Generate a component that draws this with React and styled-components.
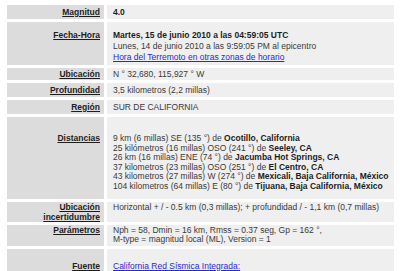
import React from "react";
import styled, { createGlobalStyle } from "styled-components";

const Global = createGlobalStyle`
  html, body { margin: 0; padding: 0; background: #ffffff; }
  body { font-family: "Liberation Sans", Arial, sans-serif; }
`;

const Table = styled.div`
  display: flex;
  flex-direction: column;
  gap: 3px;
  padding: 5px 6px 0 7px;
  width: 387px;
`;

const Row = styled.div`
  display: grid;
  grid-template-columns: 97px 287px;
  column-gap: 3px;
`;

const Label = styled.div`
  background: #dcdcdc;
  text-align: right;
  padding: ${(p) => p.$pt ?? 2.5}px 4px ${(p) => p.$pb ?? 2.5}px 4px;
  font-size: 8.5px;
  line-height: ${(p) => p.$lh ?? 9}px;
  font-weight: bold;
  color: #1e1e1e;
  text-decoration: underline;
`;

const Value = styled.div`
  background: #efefef;
  padding: ${(p) => p.$pt ?? 2.5}px 4px ${(p) => p.$pb ?? 2.5}px 6px;
  font-size: 8.5px;
  line-height: ${(p) => p.$lh ?? 9}px;
  color: #3a3a3a;
  white-space: nowrap;
`;

const Strong = styled.b`
  font-weight: bold;
  color: #1e1e1e;
`;

const Link = styled.a`
  color: #2a2acc;
  text-decoration: underline;
`;

const Line = styled.div``;

function Item({ label, pt, pb, lh, children }) {
  return (
    <Row>
      <Label $pt={pt} $pb={pb} $lh={lh}>{label}</Label>
      <Value $pt={pt} $pb={pb} $lh={lh}>{children}</Value>
    </Row>
  );
}

const distances = [
  ["9 km (6 millas) SE (135 °) de ", "Ocotillo, California"],
  ["25 kilómetros (16 millas) OSO (241 °) de ", "Seeley, CA"],
  ["26 km (16 millas) ENE (74 °) de ", "Jacumba Hot Springs, CA"],
  ["37 kilometros (23 millas) OSO (251 °) de ", "El Centro, CA"],
  ["43 kilometros (27 millas) W (274 °) de ", "Mexicali, Baja California, México"],
  ["104 kilometros (64 millas) E (80 °) de ", "Tijuana, Baja California, México"],
];

export default function App() {
  return (
    <>
      <Global />
      <Table>
        <Item label="Magnitud">
          <Strong>4.0</Strong>
        </Item>
        <Item label="Fecha-Hora" pt={7.5} pb={2.5} lh={11}>
          <Line><Strong>Martes, 15 de junio 2010 a las 04:59:05 UTC</Strong></Line>
          <Line>Lunes, 14 de junio 2010 a las 9:59:05 PM al epicentro</Line>
          <Line><Link href="#">Hora del Terremoto en otras zonas de horario</Link></Line>
        </Item>
        <Item label="Ubicación" pt={1.5} pb={1.5}>
          N ° 32,680, 115,927 ° W
        </Item>
        <Item label="Profundidad">3,5 kilometros (2,2 millas)</Item>
        <Item label="Región">SUR DE CALIFORNIA</Item>
        <Item label="Distancias" pt={17} pb={7} lh={9.6}>
          {distances.map(([t, c]) => (
            <Line key={c}>
              {t}
              <Strong>{c}</Strong>
            </Line>
          ))}
        </Item>
        <Row>
          <Label $pt={0} $pb={0} $lh={10}>
            Ubicación
            <br />
            incertidumbre
          </Label>
          <Value $pt={0} $pb={0} $lh={10}>
            Horizontal + / - 0.5 km (0,3 millas); + profundidad / - 1,1 km (0,7 millas)
          </Value>
        </Row>
        <Item label="Parámetros" pt={1} pb={1.5} lh={9.6}>
          <Line>Nph = 58, Dmin = 16 km, Rmss = 0.37 seg, Gp = 162 °,</Line>
          <Line>M-type = magnitud local (ML), Version = 1</Line>
        </Item>
        <Item label="Fuente" pt={12.5} pb={6} lh={9.6}>
          <Link href="#">California Red Sísmica Integrada:</Link>
        </Item>
      </Table>
    </>
  );
}
